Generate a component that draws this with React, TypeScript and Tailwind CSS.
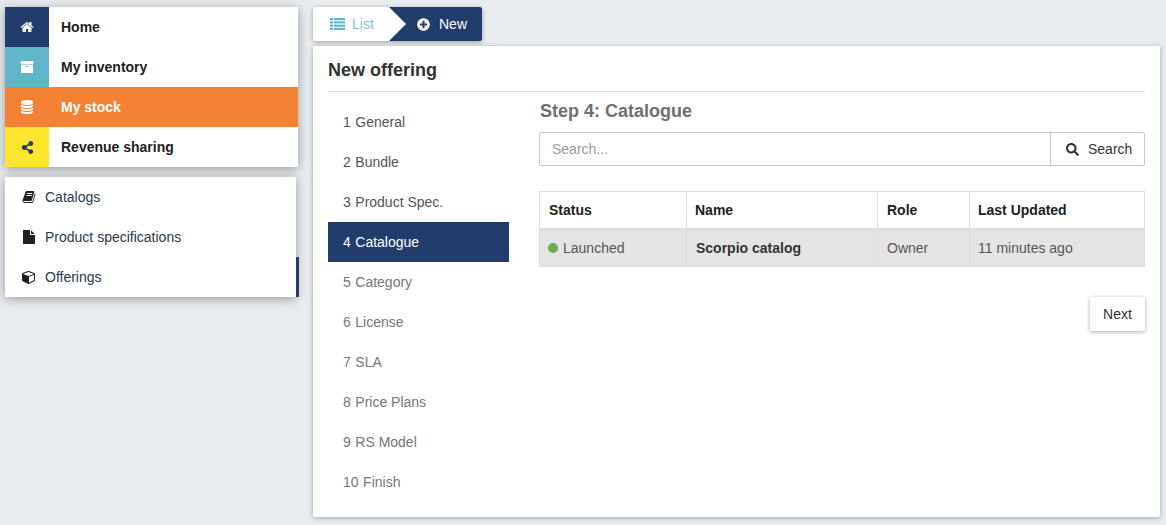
import React from "react";
import { FaShareAlt, FaPlusCircle, FaSearch } from "react-icons/fa";

const Fa4 = ({ d }: { d: string }) => (
  <svg viewBox="0 0 1792 1792" width="14" height="14" fill="currentColor" className="shrink-0">
    <path d={d} />
  </svg>
);

const Home = () => <Fa4 d="M1472 992v480q0 26-19 45t-45 19h-384v-384h-256v384h-384q-26 0-45-19t-19-45v-480q0-1 .5-3t.5-3l575-474 575 474q1 2 1 6zm223-69l-62 74q-8 9-21 11h-3q-13 0-21-7l-692-577-692 577q-12 8-24 7-13-2-21-11l-62-74q-8-10-7-23.5t11-21.5l719-599q32-26 76-26t76 26l244 204v-195q0-14 9-23t23-9h192q14 0 23 9t9 23v408l219 182q10 8 11 21.5t-7 23.5z" />;
const Archive = () => <Fa4 d="M1088 832q0-26-19-45t-45-19h-256q-26 0-45 19t-19 45 19 45 45 19h256q26 0 45-19t19-45zm576-192v960q0 26-19 45t-45 19h-1408q-26 0-45-19t-19-45v-960q0-26 19-45t45-19h1408q26 0 45 19t19 45zm64-448v256q0 26-19 45t-45 19h-1536q-26 0-45-19t-19-45v-256q0-26 19-45t45-19h1536q26 0 45 19t19 45z" />;
const Database = () => <Fa4 d="M896 768q237 0 443-43t325-127v170q0 69-103 128t-280 93.5-385 34.5-385-34.5-280-93.5-103-128v-170q119 84 325 127t443 43zm0 768q237 0 443-43t325-127v170q0 69-103 128t-280 93.5-385 34.5-385-34.5-280-93.5-103-128v-170q119 84 325 127t443 43zm0-384q237 0 443-43t325-127v170q0 69-103 128t-280 93.5-385 34.5-385-34.5-280-93.5-103-128v-170q119 84 325 127t443 43zm0-1152q208 0 385 34.5t280 93.5 103 128v128q0 69-103 128t-280 93.5-385 34.5-385-34.5-280-93.5-103-128v-128q0-69 103-128t280-93.5 385-34.5z" />;
const Share = () => <FaShareAlt className="text-[13px]" />;
const Book = () => <Fa4 d="M1703 478q40 57 18 129l-275 906q-19 64-76.500 107.500t-122.500 43.500h-923q-77 0-148.500-53.500t-99.500-131.500q-24-67-2-127 0-4 3-27t4-37q1-8-3-21.500t-3-19.500q2-11 8-21t16.500-23.500 16.500-23.500q23-38 45-91.500t30-91.500q3-10 .5-30t-.5-28q3-11 17-28t17-23q21-36 42-92t25-90q1-9-2.500-32t.5-28q4-13 22-30.500t22-22.500q19-26 42.500-84.500t27.500-96.500q1-8-3-25.500t-2-26.500q2-8 9-18t18-23 17-21q8-12 16.500-30.500t15-35 16-36 19.500-32 26.500-23.500 36-11.500 47.500 5.500l-1 3q38-9 51-9h761q74 0 114 56t18 130l-274 906q-36 119-71.500 153.500t-128.500 34.500h-869q-27 0-38 15-11 16-1 43 24 70 144 70h923q29 0 56-15.500t35-41.500l300-987q7-22 5-57 38 15 59 43zm-1064 2q-4 13 2 22.500t20 9.500h608q13 0 25.500-9.500t16.500-22.500l21-64q4-13-2-22.500t-20-9.500h-608q-13 0-25.500 9.500t-16.500 22.500zm-83 256q-4 13 2 22.500t20 9.500h608q13 0 25.500-9.500t16.500-22.500l21-64q4-13-2-22.500t-20-9.500h-608q-13 0-25.500 9.500t-16.500 22.500z" />;
const File = () => <Fa4 d="M1152 512v-472q22 14 36 28l408 408q14 14 28 36h-472zm-128 32q0 40 28 68t68 28h544v1056q0 40-28 68t-68 28h-1344q-40 0-68-28t-28-68v-1600q0-40 28-68t68-28h800v544z" />;
const Cube = () => <Fa4 d="M896 1629l640-349v-636l-640 233v752zm-64-865l698-254-698-254-698 254zm832-252v768q0 35-18 65t-50 47l-704 384q-28 16-61 16t-61-16l-704-384q-32-18-50-47t-18-65v-768q0-40 23-73t61-47l704-256q22-8 44-8t44 8l704 256q38 14 61 47t23 73z" />;
const ListIcon = () => (
  <svg viewBox="0 0 15 12" width="15" height="12" fill="currentColor" className="shrink-0">
    <rect x="0" y="0" width="3" height="2.2" />
    <rect x="4" y="0" width="11" height="2.2" />
    <rect x="0" y="3.3" width="3" height="2.2" />
    <rect x="4" y="3.3" width="11" height="2.2" />
    <rect x="0" y="6.6" width="3" height="2.2" />
    <rect x="4" y="6.6" width="11" height="2.2" />
    <rect x="0" y="9.8" width="3" height="2.2" />
    <rect x="4" y="9.8" width="11" height="2.2" />
  </svg>
);

const mainNav = [
  { label: "Home", icon: Home, box: "bg-[#223c6b] text-white", row: "bg-white text-[#212121]" },
  { label: "My inventory", icon: Archive, box: "bg-[#62b6c9] text-white", row: "bg-white text-[#212121]" },
  { label: "My stock", icon: Database, box: "bg-[#f38235] text-white", row: "bg-[#f38235] text-white" },
  { label: "Revenue sharing", icon: Share, box: "bg-[#ffe52e] text-[#223c6b]", row: "bg-white text-[#212121]" },
];

const subNav = [
  { label: "Catalogs", icon: Book, active: false },
  { label: "Product specifications", icon: File, active: false },
  { label: "Offerings", icon: Cube, active: true },
];

const steps = ["General", "Bundle", "Product Spec.", "Catalogue", "Category", "License", "SLA", "Price Plans", "RS Model", "Finish"];

const headers = [
  { label: "Status", pad: "pl-[9px]" },
  { label: "Name", pad: "pl-[8px]" },
  { label: "Role", pad: "pl-[9px]" },
  { label: "Last Updated", pad: "pl-[8px]" },
];

export default function App() {
  return (
    <div className="flex h-[525px] w-[1166px] overflow-hidden bg-[#e9ecef] pl-[5px] pt-[7px] text-[14px] leading-[20px] text-[#333333] [font-family:'Liberation_Sans',Arial,sans-serif]">
      <aside className="flex w-[293px] shrink-0 flex-col gap-[10px]">
        <nav className="bg-white shadow-[0_2px_10px_rgba(0,0,0,0.35)]">
          {mainNav.map((n) => (
            <div key={n.label} className={`flex h-[40px] items-center ${n.row}`}>
              <span className={`flex h-[40px] w-[44px] items-center justify-center ${n.box}`}>
                <n.icon />
              </span>
              <span className="ml-[12px] font-bold">{n.label}</span>
            </div>
          ))}
        </nav>
        <nav className="mr-[2px] bg-white shadow-[0_2px_10px_rgba(0,0,0,0.35)]">
          {subNav.map((n) => (
            <div key={n.label} className="relative flex h-[40px] items-center pl-[17px] text-[#2b3a4d]">
              <span className="flex w-[23px] text-[#212121]">
                <n.icon />
              </span>
              <span>{n.label}</span>
              {n.active && <span className="absolute right-[-3px] top-0 h-[40px] w-[3px] bg-[#223c6b]" />}
            </div>
          ))}
        </nav>
      </aside>

      <main className="ml-[15px] flex w-[847px] shrink-0 flex-col gap-[5px]">
        <div className="relative flex h-[34px] w-[169px] overflow-hidden rounded-[2px] shadow-[0_1px_4px_rgba(0,0,0,0.35)]">
          <div className="flex w-[76px] items-center gap-[7px] bg-white pl-[17px] text-[#7fc3d3]">
            <span className="text-[#62b6c9]"><ListIcon /></span>
            <span>List</span>
          </div>
          <div className="flex flex-1 items-center gap-[8px] bg-[#223c6b] pl-[28px] text-white">
            <FaPlusCircle className="text-[13px]" />
            <span className="ml-[1px]">New</span>
          </div>
          <span className="absolute left-[76px] top-0 h-[34px] w-[17px] bg-white [clip-path:polygon(0_0,100%_50%,0_100%)]" />
        </div>

        <section className="flex h-[471px] flex-col rounded-[2px] bg-white px-[15px] shadow-[0_1px_5px_rgba(0,0,0,0.3)]">
          <h1 className="flex h-[46px] shrink-0 items-center border-b border-[#dcdcdc] pt-[2px] text-[18px] font-bold text-[#333333]">New offering</h1>
          <div className="flex pt-[10px]">
            <ol className="w-[181px] shrink-0">
              {steps.map((s, i) => (
                <li
                  key={s}
                  className={`flex h-[40px] items-center pl-[15px] ${
                    i === 3 ? "bg-[#223c6b] text-white" : i < 3 ? "text-[#555555]" : "text-[#777777]"
                  }`}
                >
                  <span className="mr-[4.5px]">{i + 1}</span>
                  {s}
                </li>
              ))}
            </ol>
            <div className="-mt-[1px] ml-[30px] flex flex-1 flex-col">
              <h2 className="pl-[1px] text-[18px] font-bold leading-[20px] text-[#6f6f6f]">Step 4: Catalogue</h2>
              <div className="mt-[11px] flex h-[34px] rounded-[2px] border border-[#c8c8c8]">
                <div className="flex flex-1 items-center pl-[12px] text-[#999999]">Search...</div>
                <div className="flex w-[94px] items-center gap-[9px] border-l border-[#c8c8c8] pl-[15px] text-[#333333]">
                  <FaSearch className="text-[13px]" />
                  <span>Search</span>
                </div>
              </div>
              <table className="mt-[25px] w-full table-fixed border-collapse">
                <colgroup>
                  <col className="w-[147px]" />
                  <col className="w-[191px]" />
                  <col className="w-[92px]" />
                  <col />
                </colgroup>
                <thead>
                  <tr className="h-[37px] border-b-2 border-[#dddddd]">
                    {headers.map((h) => (
                      <th key={h.label} className={`border border-b-2 border-[#dddddd] text-left font-bold text-[#212121] ${h.pad}`}>{h.label}</th>
                    ))}
                  </tr>
                </thead>
                <tbody>
                  <tr className="h-[38px] bg-[#e4e4e4]">
                    <td className="border border-[#dddddd] px-[8px] text-[#555555]">
                      <span className="flex items-center gap-[5px]">
                        <span className="h-[10px] w-[10px] rounded-full bg-[#6bab55]" />
                        Launched
                      </span>
                    </td>
                    <td className="border border-[#dddddd] px-[9px] font-bold text-[#333333]">Scorpio catalog</td>
                    <td className="border border-[#dddddd] px-[9px] text-[#555555]">Owner</td>
                    <td className="border border-[#dddddd] px-[8px] text-[#555555]">11 minutes ago</td>
                  </tr>
                </tbody>
              </table>
              <div className="mt-[30px] flex justify-end">
                <button className="h-[34px] w-[55px] rounded-[2px] bg-white text-[#333333] shadow-[0_1px_4px_rgba(0,0,0,0.35)]">Next</button>
              </div>
            </div>
          </div>
        </section>
      </main>
    </div>
  );
}
